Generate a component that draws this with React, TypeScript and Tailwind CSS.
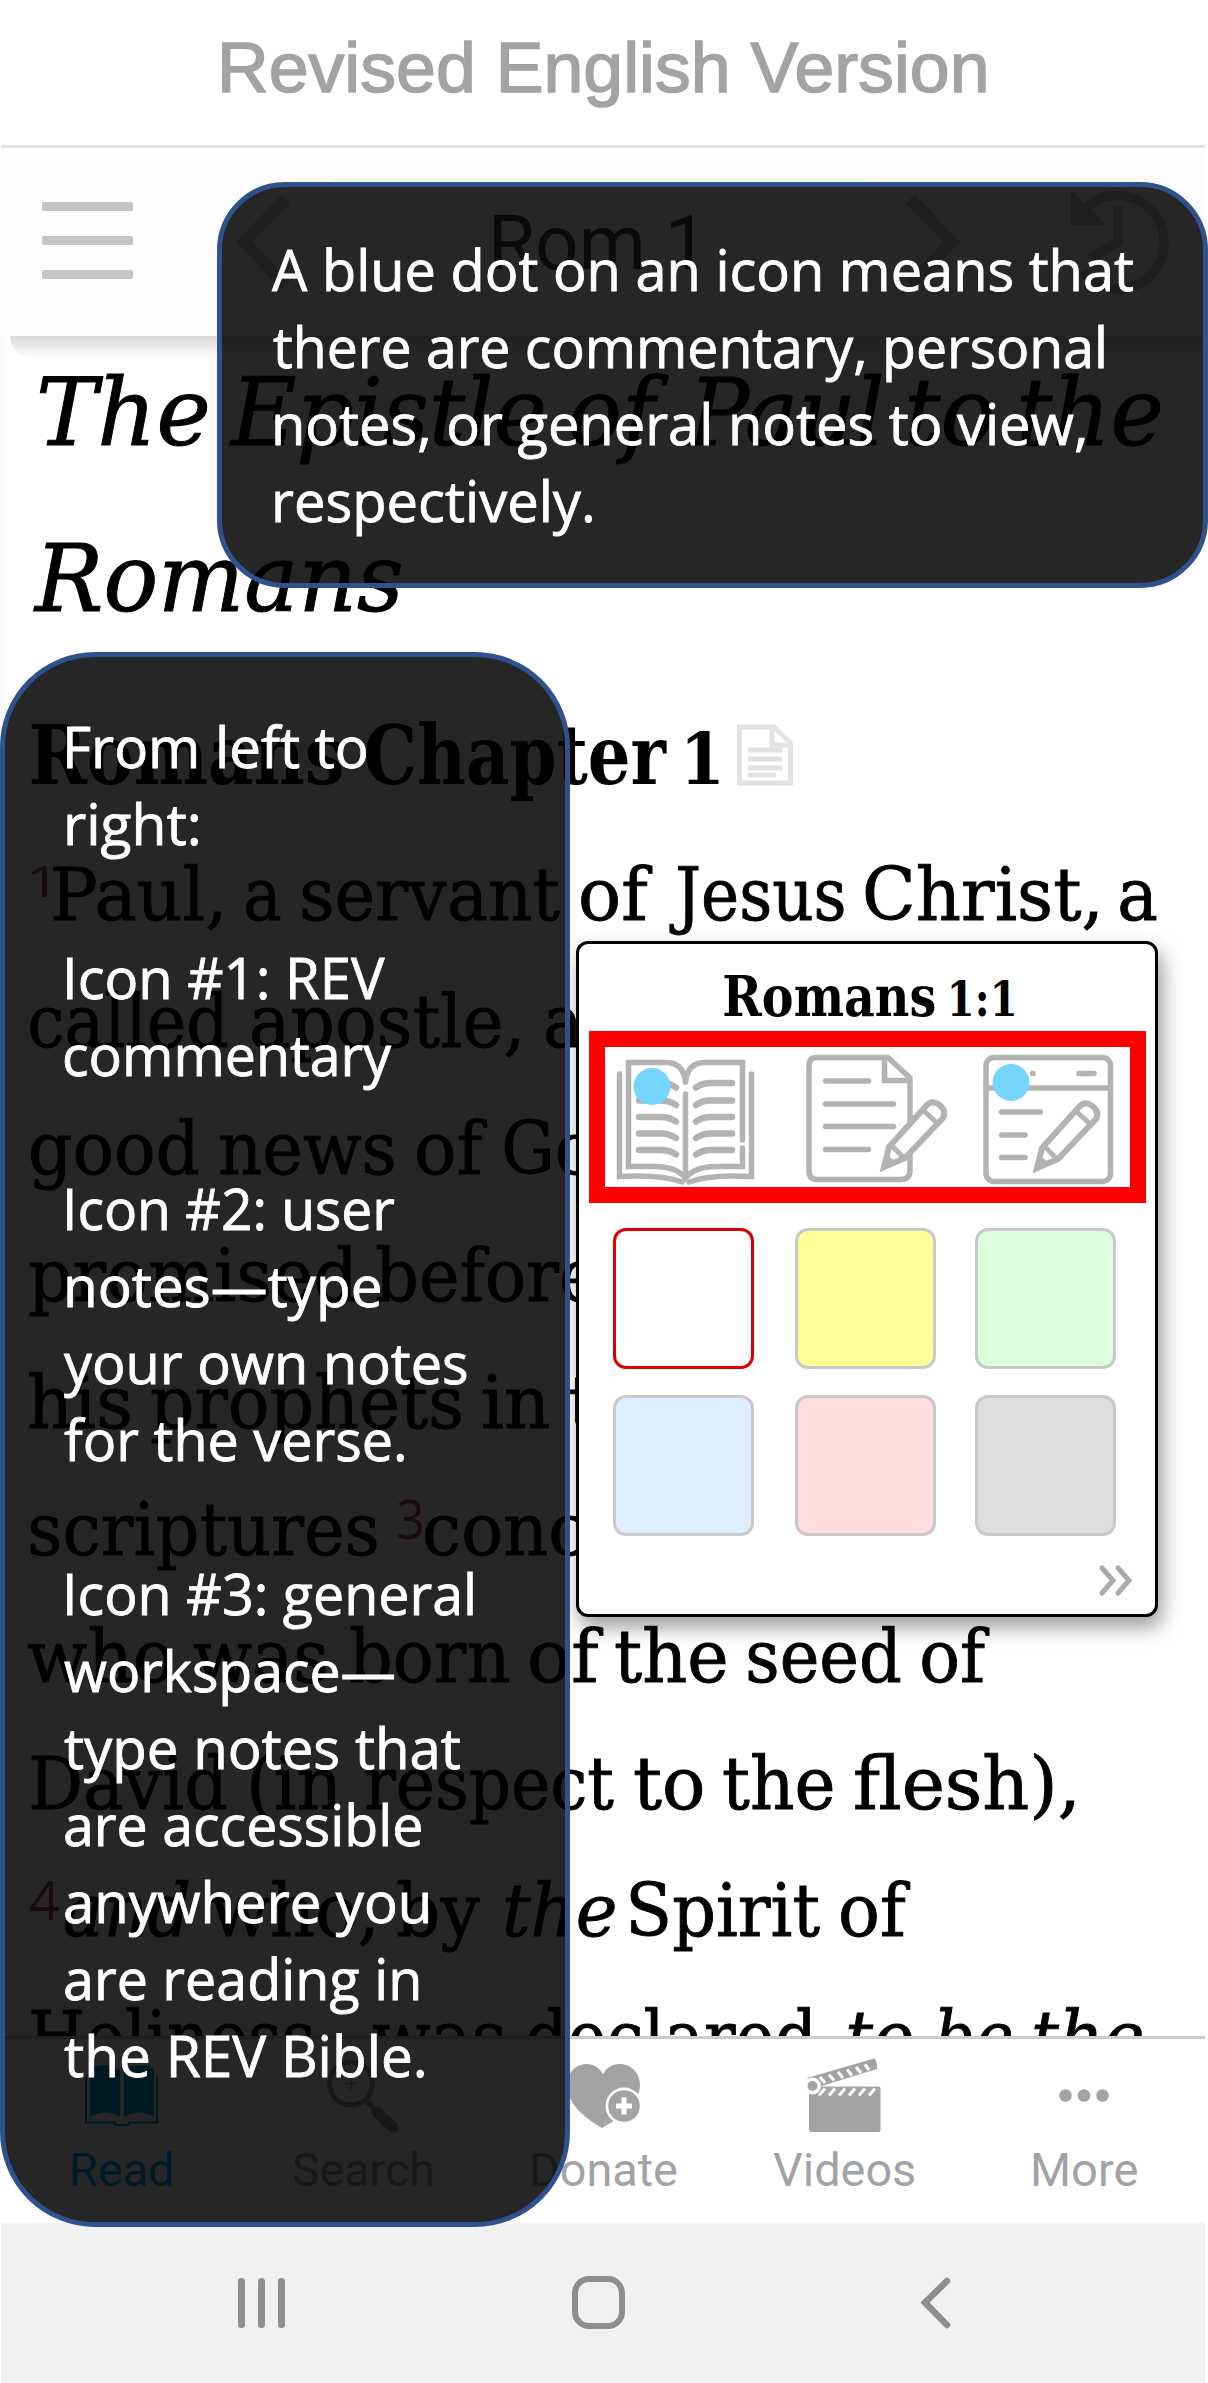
import { useLayoutEffect, useRef, useState, type ReactNode } from "react";

type FitProps = { children: string; ml?: number; w: number; className?: string };

/** One run of text whose ink is fitted horizontally to a given width. */
function Fit({ children, ml = 0, w, className = "" }: FitProps) {
  const ref = useRef<HTMLSpanElement>(null);
  const [fit, setFit] = useState({ s: 1, t: 0 });
  useLayoutEffect(() => {
    const el = ref.current;
    if (!el) return;
    const cs = getComputedStyle(el);
    const ctx = document.createElement("canvas").getContext("2d");
    if (!ctx) return;
    ctx.font = `${cs.fontStyle} ${cs.fontWeight} ${cs.fontSize} ${cs.fontFamily}`;
    const m = ctx.measureText(children);
    const s = w / (m.actualBoundingBoxLeft + m.actualBoundingBoxRight);
    setFit({ s, t: m.actualBoundingBoxLeft * s });
  }, [children, w]);
  return (
    <span className={`block shrink-0 whitespace-nowrap ${className}`} style={{ marginLeft: ml, width: w }}>
      <span
        ref={ref}
        className="inline-block origin-left"
        style={{ transform: `translateX(${fit.t}px) scaleX(${fit.s})` }}
      >
        {children}
      </span>
    </span>
  );
}

function Row({ children, className = "" }: { children?: ReactNode; className?: string }) {
  return <div className={`flex ${className}`}>{children}</div>;
}

type Note = [string, number, number] | null;

const topNote: Note[] = [
  ["A blue dot on an icon means that", 50, 861],
  ["there are commentary, personal", 51, 831],
  ["notes, or general notes to view,", 53, 810],
  ["respectively.", 53, 317],
];

const sideNote: Note[] = [
  ["From left to", 62, 299],
  ["right:", 62, 131],
  null,
  ["Icon #1: REV", 62, 318],
  ["commentary", 60, 327],
  null,
  ["Icon #2: user", 62, 328],
  ["notes—type", 62, 313],
  ["your own notes", 59, 403],
  ["for the verse.", 59, 340],
  null,
  ["Icon #3: general", 62, 406],
  ["workspace—", 59, 330],
  ["type notes that", 59, 396],
  ["are accessible", 60, 356],
  ["anywhere you", 60, 363],
  ["are reading in", 60, 353],
  ["the REV Bible.", 59, 360],
];

function NoteLines({ lines }: { lines: Note[] }) {
  return (
    <div className="font-['Open_Sans',sans-serif] text-[56px] leading-[77px] text-white [-webkit-text-stroke:0.800px_#ffffff]">
      {lines.map((l, i) => (
        <Row key={i} className="h-[77px]">
          {l && (
            <Fit ml={l[1]} w={l[2]}>
              {l[0]}
            </Fit>
          )}
        </Row>
      ))}
    </div>
  );
}

function Sup({ children, ml, w, className = "-mt-[12px] text-[54px]" }: { children: string; ml?: number; w: number; className?: string }) {
  return (
    <Fit ml={ml} w={w} className={`font-['Open_Sans',sans-serif] text-[#9a4a4a] [-webkit-text-stroke:0px] ${className}`}>
      {children}
    </Fit>
  );
}

function Toolbar() {
  return (
    <div className="relative z-10 ml-[1px] h-[188px] w-[1204px] bg-[#fdfdfd]">
      <div className="flex h-[188px] items-start">
        <div className="ml-[41px] mt-[54px] flex w-[91px] flex-col gap-[25px]">
          <div className="h-[9px] rounded-[2px] bg-[#c5c5c5]" />
          <div className="h-[9px] rounded-[2px] bg-[#c5c5c5]" />
          <div className="h-[9px] rounded-[2px] bg-[#c5c5c5]" />
        </div>
        <svg className="ml-[97px] mt-[40px] h-[110px] w-[70px]" viewBox="230 188 70 110" fill="none" stroke="#c8c8c8" strokeWidth="12">
          <path d="M286 199 L244 242 L286 285" />
        </svg>
        <div className="ml-[33px] mt-[31px] h-[127px] w-[530px] border-t-2 border-[#f0f0f0] font-['Roboto',sans-serif] text-[76px] leading-[125px] text-[#444]">
          <Fit ml={161} w={199}>
            Rom 1
          </Fit>
        </div>
        <svg className="ml-[35px] mt-[40px] h-[110px] w-[70px]" viewBox="898 188 70 110" fill="none" stroke="#c8c8c8" strokeWidth="12">
          <path d="M910 199 L952 242 L910 285" />
        </svg>
        <svg className="ml-[92px] mt-[32px] h-[124px] w-[120px]" viewBox="1060 180 120 124" fill="none" stroke="#c8c8c8" strokeWidth="9.5">
          <path d="M1085 209 A46.5 46.5 0 1 1 1082 272" />
          <path d="M1118 206 V242 L1091 258" />
          <path d="M1071 190 V225 H1106 Z" fill="#c8c8c8" stroke="none" />
        </svg>
      </div>
      <div className="ml-[9px] h-[22px] rounded-bl-full bg-gradient-to-b from-[#d8d8d8] to-white" />
    </div>
  );
}

function Reading() {
  return (
    <div className="h-[1700px] overflow-hidden border-l-[5px] border-[#fafafa] font-['DejaVu_Serif',serif] text-black">
      <div className="text-[93px] italic leading-[155px] [-webkit-text-stroke:1px_#000000]">
        <Row>
          <Fit ml={35} w={167}>The</Fit>
          <Fit ml={22} w={314}>Epistle</Fit>
          <Fit ml={28} w={98}>of</Fit>
          <Fit ml={18} w={194}>Paul</Fit>
          <Fit ml={28} w={82}>to</Fit>
          <Fit ml={30} w={139}>the</Fit>
        </Row>
        <Row className="mt-[11px]">
          <Fit ml={28} w={368}>Romans</Fit>
        </Row>
      </div>
      <Row className="mt-[38px] h-[120px] text-[83px] font-bold leading-[120px]">
        <Fit ml={26} w={311}>Romans</Fit>
        <Fit ml={24} w={301}>Chapter</Fit>
        <Fit ml={20} w={32} className="mt-[4px] text-[71px]">1</Fit>
        <svg className="ml-[16px] mt-[27px] h-[66px] w-[60px]" viewBox="735 722 60 66" fill="none" stroke="#e2e2e2" strokeWidth="5">
          <path d="M739.5 727 H774 L790.5 743 V783 H739.5 Z" />
          <path d="M772 727 V745 H790" />
          <path d="M748 750 H782 M748 759 H782 M748 768 H782 M748 775 H776" />
        </svg>
      </Row>
      <div className="mt-[17px] text-[72px] leading-[127px] [-webkit-text-stroke:0.900px_#000000]">
        <Row>
          <Sup ml={25} w={18} className="-mt-[15px] text-[43px]">1</Sup>
          <Fit ml={5} w={168}>Paul,</Fit>
          <Fit ml={25} w={34}>a</Fit>
          <Fit ml={23} w={257}>servant</Fit>
          <Fit ml={21} w={71}>of</Fit>
          <Fit ml={17} w={175}>Jesus</Fit>
          <Fit ml={22} w={231}>Christ,</Fit>
          <Fit ml={23} w={36}>a</Fit>
        </Row>
        <Row>
          <Fit ml={25} w={197}>called</Fit>
          <Fit ml={25} w={267}>apostle,</Fit>
          <Fit ml={27} w={35}>a</Fit>
        </Row>
        <Row>
          <Fit ml={26} w={167}>good</Fit>
          <Fit ml={22} w={174}>news</Fit>
          <Fit ml={23} w={70}>of</Fit>
          <Fit ml={18} w={87}>Go</Fit>
        </Row>
        <Row>
          <Fit ml={25} w={326}>promised</Fit>
          <Fit ml={21} w={220}>before</Fit>
        </Row>
        <Row>
          <Fit ml={24} w={101}>his</Fit>
          <Fit ml={22} w={309}>prophets</Fit>
          <Fit ml={22} w={66}>in</Fit>
          <Fit ml={21} w={25}>t</Fit>
        </Row>
        <Row>
          <Fit ml={26} w={346}>scriptures</Fit>
          <Sup ml={21} w={24}>3</Sup>
          <Fit ml={3} w={160}>conc</Fit>
        </Row>
        <Row>
          <Fit ml={23} w={144}>who</Fit>
          <Fit ml={22} w={132}>was</Fit>
          <Fit ml={25} w={158}>born</Fit>
          <Fit ml={21} w={73}>of</Fit>
          <Fit ml={13} w={110}>the</Fit>
          <Fit ml={23} w={151}>seed</Fit>
          <Fit ml={22} w={67}>of</Fit>
        </Row>
        <Row>
          <Fit ml={26} w={195}>David</Fit>
          <Fit ml={25} w={90}>(in</Fit>
          <Fit ml={25} w={248}>respect</Fit>
          <Fit ml={21} w={67}>to</Fit>
          <Fit ml={22} w={109}>the</Fit>
          <Fit ml={22} w={219}>flesh),</Fit>
        </Row>
        <Row>
          <Sup ml={25} w={29}>4</Sup>
          <Fit ml={6} w={124} className="italic">and</Fit>
          <Fit ml={22} w={162}>who,</Fit>
          <Fit ml={25} w={82}>by</Fit>
          <Fit ml={25} w={110} className="italic">the</Fit>
          <Fit ml={16} w={189}>Spirit</Fit>
          <Fit ml={21} w={69}>of</Fit>
        </Row>
        <Row>
          <Fit ml={26} w={299}>Holiness,</Fit>
          <Fit ml={43} w={131}>was</Fit>
          <Fit ml={24} w={287}>declared</Fit>
          <Fit ml={33} w={64} className="italic">to</Fit>
          <Fit ml={25} w={74} className="italic">be</Fit>
          <Fit ml={23} w={108} className="italic">the</Fit>
        </Row>
      </div>
    </div>
  );
}

const tabs: { label: string; ml: number; w: number; color: string; vb: string; pad: number; icon: ReactNode }[] = [
  {
    label: "Read",
    ml: 72,
    w: 100,
    color: "text-[#00b0f0]",
    vb: "82 2054 80 82",
    pad: 10,
    icon: (
      <g fill="currentColor">
        <path d="M90 2068 Q106 2061 120 2070 V2117 Q106 2108 90 2117 Z" />
        <path d="M124 2070 Q138 2061 154 2068 V2117 Q138 2108 124 2117 Z" />
        <path d="M86 2076 V2122.5 H115 V2125 H129 V2122.5 H157 V2076" fill="none" stroke="currentColor" strokeWidth="2" />
      </g>
    ),
  },
  {
    label: "Search",
    ml: 121,
    w: 139,
    color: "text-[#a1a3a4]",
    vb: "322 2054 80 82",
    pad: 29,
    icon: (
      <g fill="none" stroke="currentColor">
        <circle cx="351" cy="2083.5" r="21.5" strokeWidth="5" />
        <path d="M366 2100 L377 2112" strokeWidth="5" />
        <path d="M377 2112 L393 2127" strokeWidth="11" strokeLinecap="round" />
        <path d="M345 2083.5 H357 M351 2077 V2090" strokeWidth="1.5" />
      </g>
    ),
  },
  {
    label: "Donate",
    ml: 100,
    w: 145,
    color: "text-[#a1a3a4]",
    vb: "564 2054 80 82",
    pad: 32,
    icon: (
      <g>
        <path
          d="M603 2074 C598 2066 592 2064 586 2064 C576 2064 567 2073 567 2085 C567 2104 585 2118 602 2128 C619 2118 640 2104 640 2085 C640 2073 631 2064 620 2064 C613 2064 607 2067 603 2074 Z"
          fill="currentColor"
        />
        <circle cx="624" cy="2106" r="18.5" fill="#fff" />
        <circle cx="624" cy="2106" r="15.8" fill="currentColor" />
        <path d="M616 2106 H632 M624 2097.500 V2114.500" stroke="#fff" strokeWidth="5" />
      </g>
    ),
  },
  {
    label: "Videos",
    ml: 96,
    w: 141,
    color: "text-[#a1a3a4]",
    vb: "804 2054 80 82",
    pad: 31,
    icon: (
      <g>
        <rect x="809" y="2086.500" width="71.500" height="45.500" rx="2" fill="currentColor" />
        <path d="M807 2078 L874 2058.500 Q877 2059 877 2069 L815 2088 Z" fill="currentColor" />
        <path
          d="M820 2077 L825 2083 M829 2074.500 L834 2080.500 M838 2072 L843 2078 M847 2069.500 L852 2075.500 M856 2067 L861 2073 M865 2064.500 L869 2070"
          stroke="#fff"
          strokeWidth="3"
        />
        <path
          d="M819 2095.500 L825 2088.500 M829 2095.500 L835 2088.500 M839 2095.500 L845 2088.500 M849 2095.500 L855 2088.500 M859 2095.500 L865 2088.500 M869 2095.500 L875 2088.500"
          stroke="#fff"
          strokeWidth="3"
        />
        <circle cx="812.500" cy="2086" r="8.500" fill="#fff" />
        <circle cx="812.500" cy="2086" r="5" fill="currentColor" />
      </g>
    ),
  },
  {
    label: "More",
    ml: 119,
    w: 104.5,
    color: "text-[#a1a3a4]",
    vb: "1044 2054 80 82",
    pad: 11,
    icon: (
      <g fill="currentColor">
        <circle cx="1065.500" cy="2095.500" r="6.300" />
        <circle cx="1084" cy="2095.500" r="6.300" />
        <circle cx="1102.500" cy="2095.500" r="6.300" />
      </g>
    ),
  },
];

function TabBar() {
  return (
    <div className="flex h-[187px] w-[1205px] border-t-[3px] border-[#cbcbcb] bg-white">
      {tabs.map((t) => (
        <div key={t.label} className={`shrink-0 pt-[15px] ${t.color}`} style={{ marginLeft: t.ml, width: t.w }}>
          <svg className="h-[82px] w-[80px]" viewBox={t.vb} style={{ marginLeft: t.pad }}>
            {t.icon}
          </svg>
          <div className="font-['Roboto',sans-serif] text-[47px] leading-[67px]">
            <Fit w={t.w}>{t.label}</Fit>
          </div>
        </div>
      ))}
    </div>
  );
}

function SystemNav() {
  return (
    <div className="ml-[1px] flex h-[160px] w-[1204px] items-start bg-[#f1f1f1] pt-[53px]">
      <div className="ml-[237px] mt-[2px] flex gap-[13px]">
        <div className="h-[50px] w-[7px] rounded-full bg-[#8e8e8e]" />
        <div className="h-[50px] w-[7px] rounded-full bg-[#8e8e8e]" />
        <div className="h-[50px] w-[7px] rounded-full bg-[#8e8e8e]" />
      </div>
      <div className="ml-[287px] h-[53px] w-[53px] rounded-[17px] border-[6px] border-[#8e8e8e]" />
      <svg className="ml-[291px] h-[54px] w-[40px]" viewBox="916 2276 40 54" fill="none" stroke="#8e8e8e" strokeWidth="6.500" strokeLinecap="round">
        <path d="M947 2281 L925 2302.500 L947 2325" />
      </svg>
    </div>
  );
}

function Pencil() {
  return (
    <>
      <path d="M884 1167 L889 1147 L926 1106 Q931 1100 938 1104 Q947 1110 943 1118 L905 1158 Z" fill="#fff" strokeWidth="6" />
      <path d="M891 1145 L904 1158 M923 1110 L937 1123" strokeWidth="5" />
      <path d="M884 1167 L887 1157 L894 1162 Z" fill="#b3b3b3" strokeWidth="3" />
    </>
  );
}

function BookIcon() {
  const rows = [1083, 1100.5, 1117, 1133.5, 1150];
  return (
    <svg className="h-[134px] w-[146px]" viewBox="612 1053 146 134" fill="none" stroke="#b3b3b3" strokeWidth="5.500" strokeLinecap="round">
      <path d="M685.500 1082 C684 1067 676 1062.500 666 1062.500 H628.500 V1166.500 H655 Q676 1166.500 685.500 1178 Q695 1166.500 716 1166.500 H742.500 V1148" strokeLinejoin="miter" />
      <path d="M685.500 1082 C687 1067 695 1062.500 705 1062.500 H742.500 V1140" />
      <path d="M685.500 1094 V1178" />
      <path d="M619.500 1074 V1176.500 Q660 1174 682 1182 M751.500 1074 V1176.500 Q711 1174 689 1182" />
      {rows.map((y) => (
        <g key={y} strokeWidth="6.500">
          <path d={`M639 ${y} H660 Q670 ${y} 676 ${y + 4.5}`} />
          <path d={`M732 ${y} H711 Q702 ${y} 696 ${y + 4.5}`} />
        </g>
      ))}
      <ellipse cx="652" cy="1086.500" rx="18.500" ry="18.500" fill="#76d5ff" stroke="none" />
    </svg>
  );
}

function NotesIcon() {
  return (
    <svg className="ml-[43px] h-[134px] w-[152px]" viewBox="801 1053 152 134" fill="none" stroke="#b3b3b3" strokeWidth="5.500" strokeLinecap="round">
      <path d="M817 1057.500 H888 L910 1078 V1170 Q910 1179.500 901 1179.500 H817 Q809 1179.500 809 1171 V1066 Q809 1057.500 817 1057.500 Z" />
      <path d="M884.500 1059 V1080.500 H908" />
      <path d="M825.500 1081 H868.500 M825.500 1104 H893.500 M825.500 1126.500 H893.500 M825.500 1149.500 H868.500" />
      <Pencil />
    </svg>
  );
}

function WorkspaceIcon() {
  return (
    <svg className="ml-[26px] h-[134px] w-[138px]" viewBox="979 1053 138 134" fill="none" stroke="#b3b3b3" strokeWidth="5.500" strokeLinecap="round">
      <rect x="986" y="1057.500" width="124.500" height="124" rx="8" />
      <path d="M986 1088 H1110" />
      <path d="M1079 1073.500 H1094 M1032.500 1073.500 H1033" />
      <path d="M1001.500 1112 H1040.500 M1001.500 1135 H1025 M1001.500 1157.500 H1025" />
      <g transform="translate(153 1)">
        <Pencil />
      </g>
      <circle cx="1011" cy="1082.500" r="18.500" fill="#76d5ff" stroke="none" />
    </svg>
  );
}

const swatches = [
  "border-[#dd0000] bg-white",
  "border-[#c9c9c9] bg-[#ffff99]",
  "border-[#c9c9c9] bg-[#ddffdd]",
  "border-[#c9c9c9] bg-[#ddeeff]",
  "border-[#c9c9c9] bg-[#ffdddd]",
  "border-[#c9c9c9] bg-[#dcdddc]",
];

function VersePopup() {
  return (
    <div className="absolute left-[576px] top-[941px] z-20 h-[676px] w-[582px] rounded-[12px] border-[3px] border-black bg-white shadow-[4px_10px_20px_rgba(0,0,0,0.4)]">
      <div className="flex h-[87px] font-['DejaVu_Serif',serif] text-[56px] font-bold leading-[104px] text-black">
        <Fit ml={145} w={211}>
          Romans
        </Fit>
        <Fit ml={16} w={63} className="mt-[3px] text-[48px]">
          1:1
        </Fit>
      </div>
      <div className="ml-[10px] flex h-[172px] w-[557px] items-start border-[16px] border-[#ff0000] pl-[7px] pt-[6px]">
        <BookIcon />
        <NotesIcon />
        <WorkspaceIcon />
      </div>
      <div className="ml-[34px] mt-[25px] grid grid-cols-[182px_180px_141px] gap-y-[26px]">
        {swatches.map((c) => (
          <div key={c} className={`h-[141px] w-[141px] rounded-[13px] border-[3px] ${c}`} />
        ))}
      </div>
      <svg className="ml-[516px] mt-[26px] h-[36px] w-[42px]" viewBox="1095 1562 42 36" fill="none" stroke="#aaaaaa" strokeWidth="5" strokeLinecap="round">
        <path d="M1102 1568 L1113 1580.500 L1102 1593 M1118 1568 L1129 1580.500 L1118 1593" />
      </svg>
    </div>
  );
}

export default function App() {
  return (
    <div className="relative h-[2383px] w-[1208px] overflow-hidden bg-white">
      <div className="h-[145px] font-['Liberation_Sans',Arial,sans-serif] text-[71px] leading-[136px] text-[#a1a3a4] [-webkit-text-stroke:1.500px_#a1a3a4]">
        <Fit ml={222} w={763}>
          Revised English Version
        </Fit>
      </div>
      <div className="ml-[1px] h-[3px] w-[1204px] bg-[#e3e3e3]" />
      <Toolbar />
      <Reading />
      <TabBar />
      <SystemNav />
      <VersePopup />
      <div className="absolute left-[217px] top-[182px] z-30 h-[406px] w-[991px] rounded-[68px] border-[5px] border-[#2f528f] bg-black/85 pt-[44px]">
        <NoteLines lines={topNote} />
      </div>
      <div className="absolute left-0 top-[652px] z-30 h-[1575px] w-[570px] rounded-[95px] border-[5px] border-[#2f528f] bg-black/85 pt-[51px]">
        <NoteLines lines={sideNote} />
      </div>
    </div>
  );
}
